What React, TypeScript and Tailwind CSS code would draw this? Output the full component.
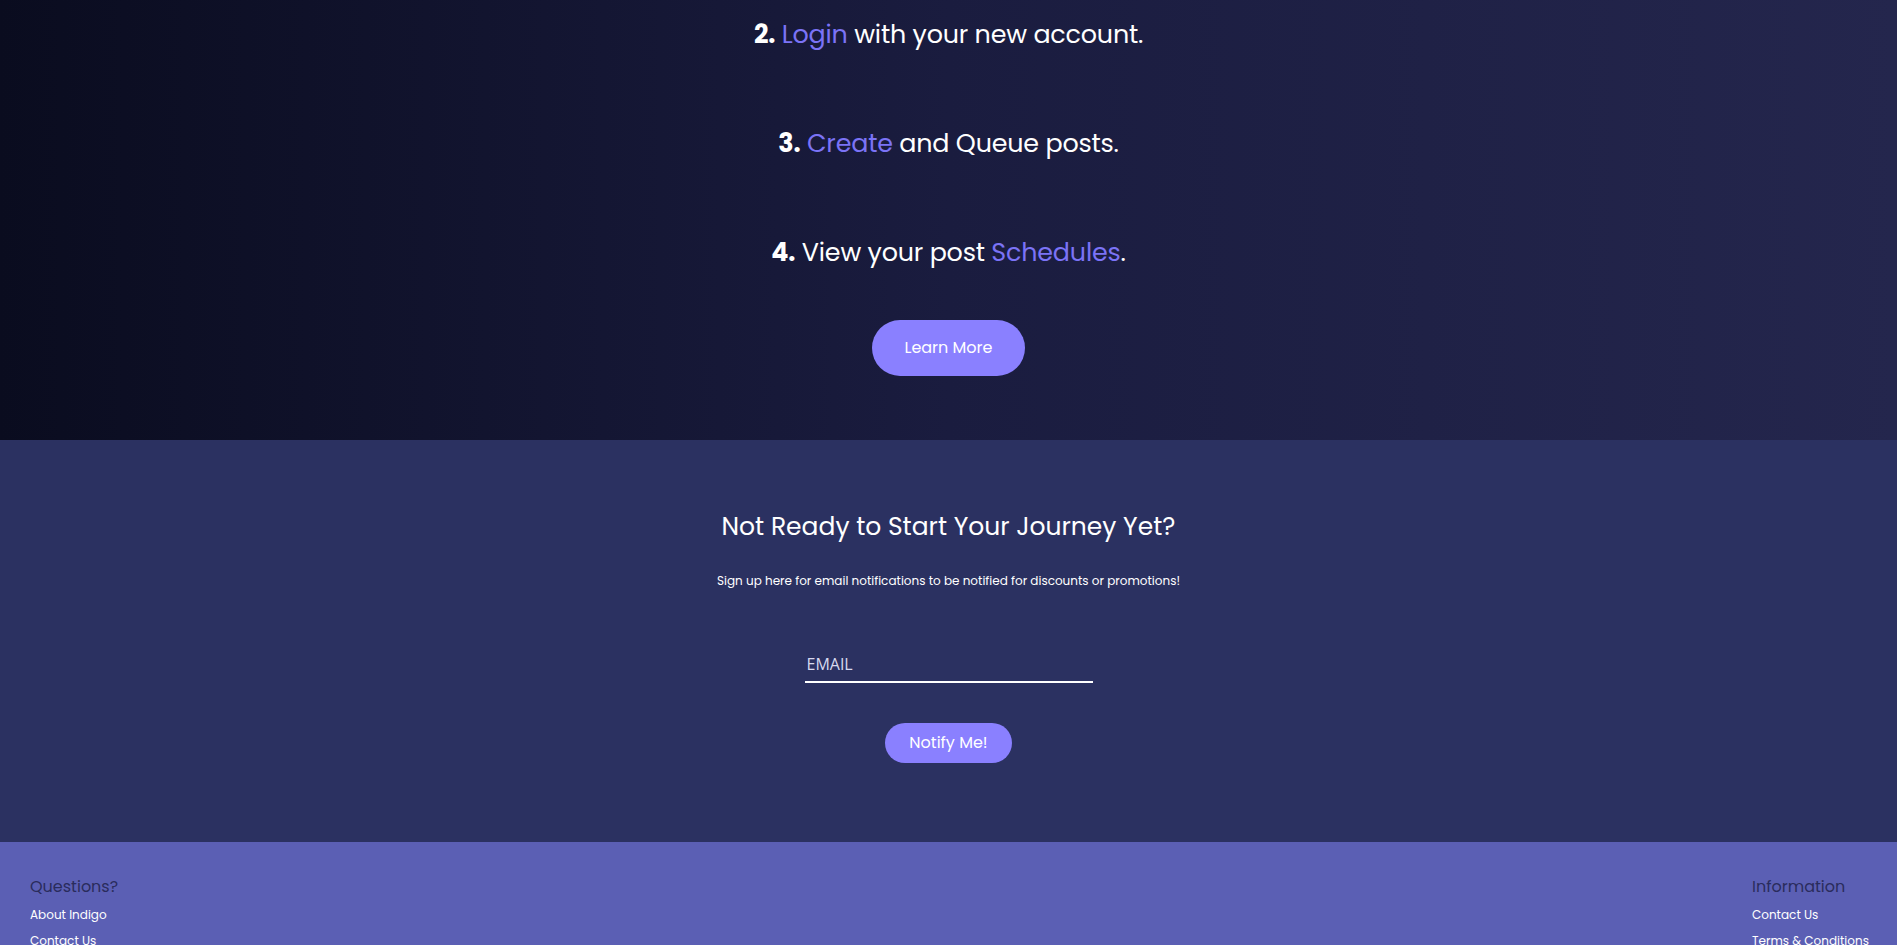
import type { ReactNode } from "react";

const steps: { num: string; parts: ReactNode }[] = [
  {
    num: "2.",
    parts: (
      <>
        <span className="text-[#7b73f6]">Login</span> with your new account.
      </>
    ),
  },
  {
    num: "3.",
    parts: (
      <>
        <span className="text-[#7b73f6]">Create</span> and Queue posts.
      </>
    ),
  },
  {
    num: "4.",
    parts: (
      <>
        View your post <span className="text-[#7b73f6]">Schedules</span>.
      </>
    ),
  },
];

export default function App() {
  return (
    <div className="min-h-screen font-['Poppins','Open_Sans',sans-serif] text-white">
      {/* steps */}
      <section className="flex h-[440px] flex-col items-center bg-gradient-to-r from-[#0a0c1f] via-[#1a1c3f] to-[#24264d] pt-[14px]">
        <div className="flex flex-col items-center gap-[69px]">
          {steps.map((s) => (
            <p key={s.num} className="text-[25.4px] leading-[40px] tracking-[-0.2px]">
              <span className="font-bold">{s.num}</span> {s.parts}
            </p>
          ))}
        </div>
        <button className="mt-[48px] h-[56px] w-[153px] rounded-full bg-[#8a80ff] text-[16px] text-white">
          Learn More
        </button>
      </section>

      {/* newsletter */}
      <section className="flex h-[402px] flex-col items-center bg-[#2b3161] pt-[72px]">
        <h2 className="text-[25px] leading-[30px]">Not Ready to Start Your Journey Yet?</h2>
        <p className="mt-[31px] text-[12px] leading-[16px]">
          Sign up here for email notifications to be notified for discounts or promotions!
        </p>
        <div className="mt-[64px] w-[288px] border-b-2 border-white pb-[6px] pl-[2px] font-['Open_Sans',sans-serif] text-[16px] leading-[22px] text-[#d7d9ee]">
          EMAIL
        </div>
        <button className="mt-[40px] h-[40px] w-[127px] rounded-full bg-[#8a80ff] text-[16px] text-white">
          Notify Me!
        </button>
      </section>

      {/* footer */}
      <footer className="flex justify-between bg-[#5b5fb4] px-[30px] pt-[34px] pb-10">
        <div className="flex flex-col">
          <h3 className="text-[16px] leading-[22px] text-[#2a2c5c]">Questions?</h3>
          <a className="mt-[9px] text-[12px] leading-[16px]">About Indigo</a>
          <a className="mt-[10px] text-[12px] leading-[16px]">Contact Us</a>
        </div>
        <div className="flex w-[115px] flex-col whitespace-nowrap">
          <h3 className="text-[16px] leading-[22px] text-[#2a2c5c]">Information</h3>
          <a className="mt-[9px] text-[12px] leading-[16px]">Contact Us</a>
          <a className="mt-[10px] text-[12px] leading-[16px]">Terms &amp; Conditions</a>
        </div>
      </footer>
    </div>
  );
}
